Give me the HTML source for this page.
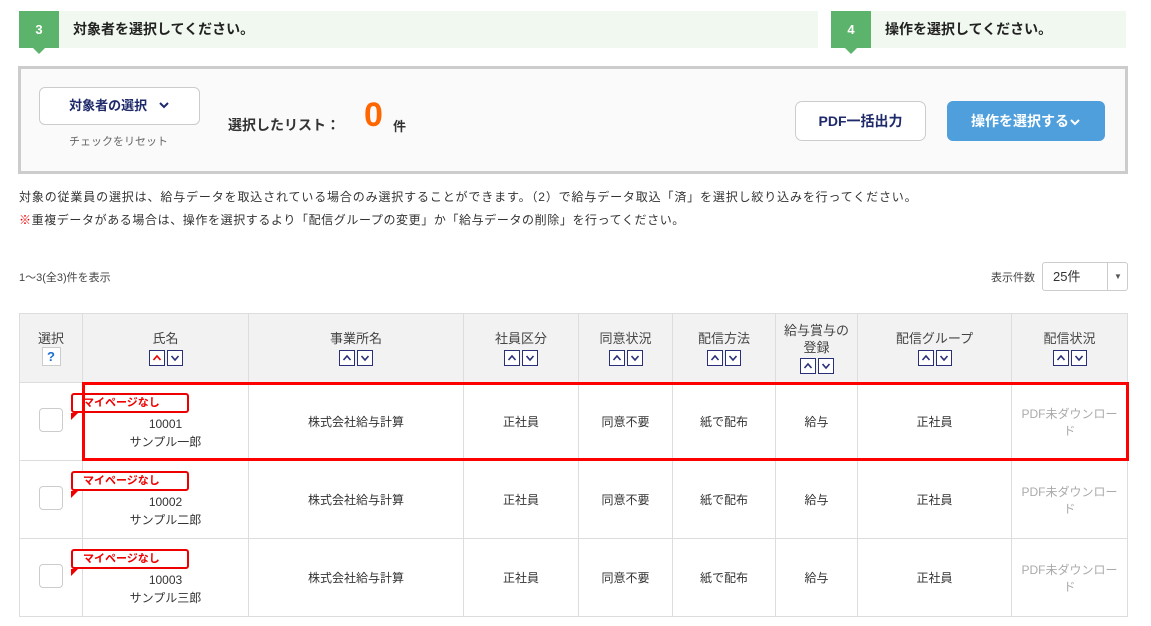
<!DOCTYPE html><html><head><meta charset="utf-8"><style>
body{margin:0;width:1151px;height:626px;background:#fff;font-family:"Liberation Sans","Noto Sans CJK JP",sans-serif;color:#333;position:relative;overflow:hidden}
.a{position:absolute}
.step{background:#f1f8ef;height:37px;top:11px}
.num{background:#5cb46c;color:#fff;font-weight:bold;font-size:13px;width:40px;height:37px;line-height:37px;text-align:center;position:absolute;left:0;top:0}
.num:after{content:"";position:absolute;left:14px;bottom:-6px;border:6px solid transparent;border-bottom:0;border-top-color:#5cb46c}
.st{position:absolute;left:54px;top:0;line-height:37px;font-size:14px;font-weight:bold;color:#222}
table{position:absolute;left:19px;top:313px;border-collapse:collapse;width:1109px;font-size:12px;table-layout:fixed}
td,th{border:1px solid #ddd;text-align:center;padding:0;font-weight:normal}
th{background:#f2f2f2;height:68px;font-size:13px;color:#444;line-height:17px}
td{height:77px}
.s{display:inline-block;width:14px;height:14px;border:1px solid #2a2f7a;background:#fff;margin:2px 1px 0;vertical-align:middle}
.s svg{display:block}
.cb{display:inline-block;width:22px;height:22px;border:1px solid #ccc;border-radius:4px;background:#fff}
.tag{position:absolute;left:-12px;top:10px;border:2px solid #e00;border-radius:3px;color:#e00;font-weight:bold;font-size:11px;width:104px;height:16px;line-height:16px;text-align:left;padding-left:10px;background:#fff}
.tag:after{content:"";position:absolute;left:-2px;bottom:-9px;border-left:7px solid #e00;border-bottom:7px solid transparent}
.p{letter-spacing:0.85px}
</style></head><body>
<div class="a step" style="left:19px;width:799px"><div class="num">3</div><div class="st">対象者を選択してください。</div></div>
<div class="a step" style="left:831px;width:295px"><div class="num">4</div><div class="st">操作を選択してください。</div></div>
<div class="a" style="left:18px;top:66px;width:1104px;height:102px;border:3px solid #ccc;background:#fafafa"></div>
<div class="a" style="left:39px;top:87px;width:159px;height:36px;border:1px solid #ccc;border-radius:6px;background:#fff;font-size:13px;font-weight:bold;color:#1e2a6a;line-height:36px;text-align:center">対象者の選択 &nbsp;&nbsp;<svg width="12" height="8" viewBox="0 0 12 8" style="vertical-align:1px"><path d="M2 2l4 4 4-4" fill="none" stroke="#1e2a6a" stroke-width="2"/></svg></div>
<div class="a" style="left:69px;top:133px;font-size:11px;color:#666">チェックをリセット</div>
<div class="a" style="left:228px;top:115px;font-size:14px;font-weight:bold;color:#333">選択したリスト：</div>
<div class="a" style="left:364px;top:96px;font-size:34px;font-weight:bold;color:#f60">0</div>
<div class="a" style="left:393px;top:116px;font-size:13px;font-weight:bold">件</div>
<div class="a" style="left:795px;top:101px;width:129px;height:38px;border:1px solid #ccc;border-radius:7px;background:#fff;font-size:14px;font-weight:bold;color:#1e2a6a;line-height:38px;text-align:center">PDF一括出力</div>
<div class="a" style="left:947px;top:101px;width:158px;height:40px;border-radius:6px;background:#4f9fdc;font-size:14px;font-weight:bold;color:#fff;line-height:40px;text-align:center">操作を選択する<svg width="12" height="8" viewBox="0 0 12 8"><path d="M2 2l4 4 4-4" fill="none" stroke="#fff" stroke-width="2"/></svg></div>
<div class="a p" style="left:19px;top:188px;font-size:12px;color:#333">対象の従業員の選択は、給与データを取込されている場合のみ選択することができます。（2）で給与データ取込「済」を選択し絞り込みを行ってください。</div>
<div class="a p" style="left:19px;top:211px;font-size:12px;color:#333;letter-spacing:0.6px"><span style="color:#e00">※</span>重複データがある場合は、操作を選択するより「配信グループの変更」か「給与データの削除」を行ってください。</div>
<div class="a" style="left:19px;top:269px;font-size:11px;color:#444">1〜3(全3)件を表示</div>
<div class="a" style="left:991px;top:269px;font-size:11px;color:#444">表示件数</div>
<div class="a" style="left:1042px;top:262px;width:84px;height:27px;border:1px solid #ccc;border-radius:3px;background:#fff;font-size:13px;line-height:27px"><span style="padding-left:10px">25件</span><span style="position:absolute;left:64px;top:0;height:27px;border-left:1px solid #ccc;width:20px;text-align:center;font-size:8px;color:#555">▼</span></div>
<table>
<colgroup><col style="width:63px"><col style="width:166px"><col style="width:215px"><col style="width:115px"><col style="width:94px"><col style="width:103px"><col style="width:82px"><col style="width:154px"><col></colgroup>
<tr><th>選択<br><span style="display:inline-block;width:17px;height:17px;background:#fff;border:1px solid #ccc;color:#1a6fd0;font-weight:bold;font-size:13px;line-height:17px">?</span></th>
<th>氏名<br><span class="s"><svg width="14" height="14"><path d="M3.5 9l3.5-4 3.5 4" fill="none" stroke="#e00" stroke-width="1.6"/></svg></span><span class="s"><svg width="14" height="14"><path d="M3.5 5l3.5 4 3.5-4" fill="none" stroke="#2a2f7a" stroke-width="1.6"/></svg></span></th>
<th>事業所名<br>SORT</th><th>社員区分<br>SORT</th><th>同意状況<br>SORT</th><th>配信方法<br>SORT</th><th>給与賞与の<br>登録<br>SORT</th><th>配信グループ<br>SORT</th><th>配信状況<br>SORT</th></tr>
<tr><td><span class="cb"></span></td><td style="position:relative"><div class="tag">マイページなし</div><div style="padding-top:22px;line-height:18px">10001<br>サンプル一郎</div></td><td>株式会社給与計算</td><td>正社員</td><td>同意不要</td><td>紙で配布</td><td>給与</td><td>正社員</td><td style="color:#aaa">PDF未ダウンロー<br>ド</td></tr>
<tr><td><span class="cb"></span></td><td style="position:relative"><div class="tag">マイページなし</div><div style="padding-top:22px;line-height:18px">10002<br>サンプル二郎</div></td><td>株式会社給与計算</td><td>正社員</td><td>同意不要</td><td>紙で配布</td><td>給与</td><td>正社員</td><td style="color:#aaa">PDF未ダウンロー<br>ド</td></tr>
<tr><td><span class="cb"></span></td><td style="position:relative"><div class="tag">マイページなし</div><div style="padding-top:22px;line-height:18px">10003<br>サンプル三郎</div></td><td>株式会社給与計算</td><td>正社員</td><td>同意不要</td><td>紙で配布</td><td>給与</td><td>正社員</td><td style="color:#aaa">PDF未ダウンロー<br>ド</td></tr>
</table>
<div class="a" style="left:82px;top:382px;width:1041px;height:73px;border:3px solid #f00"></div>
<script>document.querySelectorAll('th').forEach(function(t){t.innerHTML=t.innerHTML.replace('SORT','<span class="s"><svg width="14" height="14"><path d="M3.5 9l3.5-4 3.5 4" fill="none" stroke="#2a2f7a" stroke-width="1.6"/></svg></span><span class="s"><svg width="14" height="14"><path d="M3.5 5l3.5 4 3.5-4" fill="none" stroke="#2a2f7a" stroke-width="1.6"/></svg></span>')})</script>
</body></html>
